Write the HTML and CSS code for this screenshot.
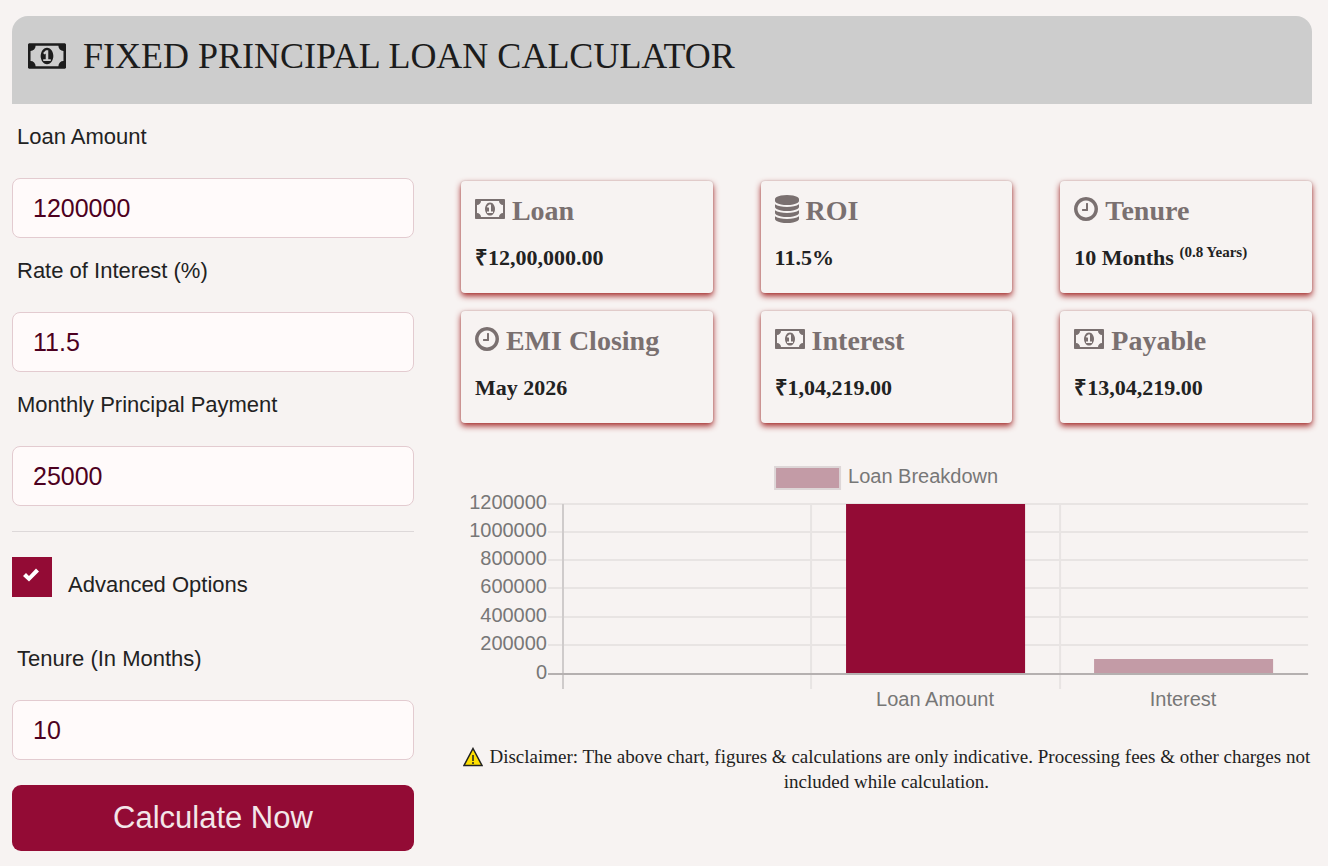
FILE: index.html
```
<!DOCTYPE html>
<html lang="en">
<head>
  <meta charset="UTF-8">
  <meta name="viewport" content="width=device-width, initial-scale=1.0">
  <title>Fixed Principal Loan Calculator</title>
  <link rel="stylesheet" href="styles.css">
</head>
<body>

  <!-- Shared icons -->
  <svg class="icon-defs" aria-hidden="true">
    <symbol id="icon-money" viewBox="0 0 1920 1792">
      <path d="M768 1152h384v-96h-128v-448h-114l-148 137 77 80q42-37 55-57h2v288h-128v96zm512-256q0 70-21 142t-59.5 134-101.5 101-138 39-138-39-101.5-101-59.5-134-21-142 21-142 59.5-134 101.5-101 138-39 138 39 101.5 101 59.5 134 21 142zm512 256v-512q-106 0-181-75t-75-181h-1152q0 106-75 181t-181 75v512q106 0 181 75t75 181h1152q0-106 75-181t181-75zm128-832v1152q0 26-19 45t-45 19h-1792q-26 0-45-19t-19-45v-1152q0-26 19-45t45-19h1792q26 0 45 19t19 45z"/>
    </symbol>
    <symbol id="icon-clock" viewBox="128 0 1536 1792">
      <path d="M1024 544v448q0 14-9 23t-23 9h-320q-14 0-23-9t-9-23v-64q0-14 9-23t23-9h224v-352q0-14 9-23t23-9h64q14 0 23 9t9 23zm416 352q0-148-73-273t-198-198-273-73-273 73-198 198-73 273 73 273 198 198 273 73 273-73 198-198 73-273zm224 0q0 209-103 385.5t-279.5 279.5-385.5 103-385.5-103-279.5-279.5-103-385.5 103-385.5 279.5-279.5 385.5-103 385.5 103 279.5 279.5 103 385.5z"/>
    </symbol>
    <symbol id="icon-database" viewBox="128 0 1536 1792">
      <path d="M896 768q237 0 443-43t325-127v170q0 69-103 128t-280 93.5-385 34.5-385-34.5-280-93.5-103-128v-170q119 84 325 127t443 43zm0 768q237 0 443-43t325-127v170q0 69-103 128t-280 93.5-385 34.5-385-34.5-280-93.5-103-128v-170q119 84 325 127t443 43zm0-384q237 0 443-43t325-127v170q0 69-103 128t-280 93.5-385 34.5-385-34.5-280-93.5-103-128v-170q119 84 325 127t443 43zm0-1152q208 0 385 34.5t280 93.5 103 128v128q0 69-103 128t-280 93.5-385 34.5-385-34.5-280-93.5-103-128v-128q0-69 103-128t280-93.5 385-34.5z"/>
    </symbol>
    <symbol id="icon-check" viewBox="0 0 18 14">
      <path d="M1 8L4 5L7 8L14 0.5L17 3.5L7 13.5Z"/>
    </symbol>
  </svg>

  <header class="page-header">
    <svg class="header-icon" aria-hidden="true"><use href="#icon-money"/></svg>
    <h1>FIXED PRINCIPAL LOAN CALCULATOR</h1>
  </header>

  <main class="calculator">
    <form class="loan-form">
      <label class="field-label" for="amount">Loan Amount</label>
      <input class="field" type="text" id="amount" value="1200000">

      <label class="field-label" for="rate">Rate of Interest (%)</label>
      <input class="field" type="text" id="rate" value="11.5">

      <label class="field-label" for="principal">Monthly Principal Payment</label>
      <input class="field" type="text" id="principal" value="25000">

      <hr>

      <div class="advanced">
        <span class="check-box">
          <input type="checkbox" id="advanced" checked>
          <svg class="check-mark" aria-hidden="true"><use href="#icon-check"/></svg>
        </span>
        <label for="advanced">Advanced Options</label>
      </div>

      <label class="field-label" for="tenure">Tenure (In Months)</label>
      <input class="field" type="text" id="tenure" value="10">

      <button type="button" class="btn">Calculate Now</button>
    </form>

    <section class="results">
      <div class="cards">
        <div class="card">
          <h2><svg class="icon-wide" aria-hidden="true"><use href="#icon-money"/></svg>Loan</h2>
          <p>₹12,00,000.00</p>
        </div>
        <div class="card">
          <h2><svg class="icon" aria-hidden="true"><use href="#icon-database"/></svg>ROI</h2>
          <p>11.5%</p>
        </div>
        <div class="card">
          <h2><svg class="icon" aria-hidden="true"><use href="#icon-clock"/></svg>Tenure</h2>
          <p>10 Months <sup>(0.8 Years)</sup></p>
        </div>
        <div class="card">
          <h2><svg class="icon" aria-hidden="true"><use href="#icon-clock"/></svg>EMI Closing</h2>
          <p>May 2026</p>
        </div>
        <div class="card">
          <h2><svg class="icon-wide" aria-hidden="true"><use href="#icon-money"/></svg>Interest</h2>
          <p>₹1,04,219.00</p>
        </div>
        <div class="card">
          <h2><svg class="icon-wide" aria-hidden="true"><use href="#icon-money"/></svg>Payable</h2>
          <p>₹13,04,219.00</p>
        </div>
      </div>

      <svg class="chart" viewBox="0 0 851 270" role="img" aria-label="Loan Breakdown">
        <!-- legend -->
        <rect class="legend-box" x="314" y="17" width="65" height="22"/>
        <text x="387" y="33">Loan Breakdown</text>

        <!-- grid -->
        <path class="grid" d="M87 54H847M87 82H847M87 110H847M87 138H847M87 167H847M87 195H847M350 54V239M599 54V239"/>
        <path class="axis" d="M102 54V239"/>

        <!-- bars -->
        <rect class="bar-loan" x="385" y="54" width="179" height="170"/>
        <rect class="bar-interest" x="633" y="209" width="179" height="15"/>
        <path class="zero" d="M87 224H847"/>

        <g text-anchor="end">
          <text x="86" y="59">1200000</text>
          <text x="86" y="87">1000000</text>
          <text x="86" y="115">800000</text>
          <text x="86" y="143">600000</text>
          <text x="86" y="172">400000</text>
          <text x="86" y="200">200000</text>
          <text x="86" y="229">0</text>
        </g>
        <g text-anchor="middle">
          <text x="474" y="256">Loan Amount</text>
          <text x="722" y="256">Interest</text>
        </g>
      </svg>

      <p class="disclaimer">
        <svg class="warning" viewBox="0 0 20 20" aria-hidden="true">
          <path class="warning-sign" d="M10 1.5L19 18.5H1Z"/>
          <path class="warning-mark" d="M10 8V14M10 15V17"/>
        </svg>
        Disclaimer: The above chart, figures &amp; calculations are only indicative. Processing fees &amp; other charges not included while calculation.
      </p>
    </section>
  </main>

</body>
</html>
```
FILE: styles.css
```
* {
  margin: 0;
  padding: 0;
  box-sizing: border-box;
}

body {
  background-color: #f7f3f2;
  color: #222;
  font-family: 'Liberation Serif', 'Times New Roman', serif;
  padding: 16px 16px 14px 12px;
}

.icon-defs {
  display: none;
}

svg {
  fill: currentColor;
}

/* Header */
.page-header {
  display: flex;
  align-items: center;
  gap: 17px;
  padding: 20px 16px 28px;
  background-color: #cdcdcd;
  border-radius: 16px 16px 0 0;
}

.page-header h1 {
  font-size: 36px;
  font-weight: normal;
  line-height: 40px;
  color: #1c1c1c;
}

.header-icon {
  width: 38px;
  height: 36px;
  color: #1c1c1c;
}

.calculator {
  display: grid;
  grid-template-columns: 17fr 36fr;
  gap: 47px;
}

/* Form */
.loan-form {
  font-family: 'Liberation Sans', Arial, sans-serif;
  font-size: 22px;
  line-height: 24px;
}

.field-label {
  display: block;
  margin: 21px 5px 29px;
}

.field {
  display: block;
  width: 100%;
  height: 60px;
  padding: 0 20px;
  font-family: inherit;
  font-size: 25px;
  color: #4d0020;
  background-color: #fffafa;
  border: 1px solid #e3cbd0;
  border-radius: 8px;
}

hr {
  margin: 25px 0;
  border: none;
  border-top: 1px solid #ddd8d9;
}

.advanced {
  display: flex;
  align-items: flex-end;
  gap: 16px;
  margin-bottom: 50px;
}

.check-box {
  position: relative;
  width: 40px;
  height: 40px;
}

.check-box input {
  display: block;
  width: 40px;
  height: 40px;
  appearance: none;
  border: 1px solid #930b35;
  cursor: pointer;
}

.check-box input:checked {
  background-color: #930b35;
}

.check-mark {
  position: absolute;
  top: 11px;
  left: 10px;
  width: 18px;
  height: 14px;
  color: #fff;
  pointer-events: none;
}

.btn {
  display: block;
  width: 100%;
  height: 66px;
  margin-top: 25px;
  font-family: inherit;
  font-size: 31px;
  color: #f3e6e9;
  background-color: #930b35;
  border: none;
  border-radius: 9px;
  cursor: pointer;
}

.btn:hover {
  background-color: #7a082b;
}

/* Results */
.results {
  padding-top: 77px;
}

.cards {
  display: grid;
  grid-template-columns: repeat(3, 1fr);
  gap: 18px 48px;
}

.card {
  padding: 14px 14px 23px;
  background-color: #f7f3f2;
  border-radius: 4px;
  box-shadow: 0 3px 6px brown, 0 0 2px rgba(0, 0, 0, 0.2);
}

.card h2 {
  display: flex;
  align-items: center;
  gap: 7px;
  font-size: 28px;
  line-height: 32px;
  color: #7a7070;
}

.card p {
  margin-top: 19px;
  font-size: 22px;
  font-weight: bold;
  line-height: 24px;
}

.card sup {
  font-size: 15px;
  line-height: 0;
}

.icon,
.icon-wide {
  width: 24px;
  height: 28px;
  margin-bottom: 4px;
}

.icon-wide {
  width: 30px;
}

.chart {
  display: block;
  width: 100%;
  margin-top: 27px;
  font-family: 'Liberation Sans', Arial, sans-serif;
  font-size: 20px;
  fill: #777;
}

.legend-box {
  fill: #c39ba6;
  stroke: #ddd6d7;
  stroke-width: 2;
}

.grid,
.axis,
.zero {
  fill: none;
  stroke: #e8e4e3;
  stroke-width: 2;
}

.axis {
  stroke: #cfcbcb;
}

.zero {
  stroke: #b5b0b0;
}

.bar-loan {
  fill: #930b35;
}

.bar-interest {
  fill: #c39ba6;
}

.disclaimer {
  margin-top: 24px;
  font-size: 19px;
  line-height: 25px;
  text-align: center;
}

.warning {
  width: 20px;
  height: 20px;
  margin-right: 2px;
  vertical-align: -4px;
}

.warning-sign {
  fill: #ffe000;
  stroke: #222;
  stroke-width: 1.5;
}

.warning-mark {
  stroke: #222;
  stroke-width: 1.5;
}

@media (max-width: 768px) {
  .calculator {
    grid-template-columns: 1fr;
  }

  .results {
    padding-top: 0;
  }

  .cards {
    grid-template-columns: 1fr;
  }
}
```
